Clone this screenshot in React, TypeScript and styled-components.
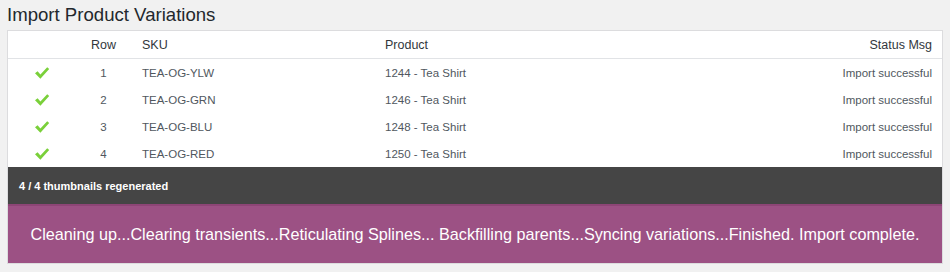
import React from 'react'
import styled, { createGlobalStyle } from 'styled-components'

const GlobalStyle = createGlobalStyle`
  html, body {
    margin: 0;
    padding: 0;
    background: #f1f1f1;
    font-family: "Liberation Sans", Arial, sans-serif;
  }
`

const Page = styled.div`
  padding: 4px 7px 0 7px;
`

const Title = styled.h1`
  margin: 0 0 5px 0;
  font-size: 18.6px;
  font-weight: 400;
  line-height: 21px;
  color: #23282d;
`

const Panel = styled.div`
  background: #fff;
  border: 1px solid #dcdcde;
  box-sizing: border-box;
`

const Table = styled.table`
  width: 100%;
  border-collapse: collapse;
  table-layout: fixed;
  font-size: 11.5px;
  color: #50575e;
`

const Th = styled.th<{ $w?: number; $align?: string }>`
  width: ${p => (p.$w ? `${p.$w}px` : 'auto')};
  text-align: ${p => p.$align || 'left'};
  font-weight: 400;
  font-size: 12.5px;
  color: #32373c;
  height: 27px;
  padding: 0 10px;
  border-bottom: 1px solid #e1e3e6;
`

const Td = styled.td<{ $align?: string }>`
  text-align: ${p => p.$align || 'left'};
  height: 27px;
  padding: 0 10px;
`

const Check = () => (
  <svg width="16" height="14" viewBox="0 0 16 14" style={{ display: 'block', margin: '0 auto' }}>
    <path d="M1 7.2 L3.6 5.2 L6.4 8.6 L13.2 1.2 L15.2 3 L6.4 12.8 Z" fill="#7ad03a" />
  </svg>
)

const StatusBar = styled.div`
  background: #454545;
  color: #fff;
  font-size: 11px;
  font-weight: 700;
  height: 37px;
  display: flex;
  align-items: center;
  padding: 0 11px;
`

const Notice = styled.div`
  background: #9c5184;
  border-top: 2px solid #8d4576;
  color: #fff;
  font-size: 16.2px;
  height: 57px;
  display: flex;
  align-items: center;
  justify-content: center;
`

const rows = [
  { row: 1, sku: 'TEA-OG-YLW', product: '1244 - Tea Shirt' },
  { row: 2, sku: 'TEA-OG-GRN', product: '1246 - Tea Shirt' },
  { row: 3, sku: 'TEA-OG-BLU', product: '1248 - Tea Shirt' },
  { row: 4, sku: 'TEA-OG-RED', product: '1250 - Tea Shirt' },
]

const App = () => {
  return (
    <>
      <GlobalStyle />
      <Page>
        <Title>Import Product Variations</Title>
        <Panel>
          <Table>
            <thead>
              <tr>
                <Th $w={47} />
                <Th $w={37} $align="center">Row</Th>
                <Th $w={223}>SKU</Th>
                <Th>Product</Th>
                <Th $w={180} $align="right">Status Msg</Th>
              </tr>
            </thead>
            <tbody>
              {rows.map(r => (
                <tr key={r.row}>
                  <Td><Check /></Td>
                  <Td $align="center">{r.row}</Td>
                  <Td>{r.sku}</Td>
                  <Td>{r.product}</Td>
                  <Td $align="right">Import successful</Td>
                </tr>
              ))}
            </tbody>
          </Table>
          <StatusBar>4 / 4 thumbnails regenerated</StatusBar>
          <Notice>
            Cleaning up...Clearing transients...Reticulating Splines... Backfilling parents...Syncing variations...Finished. Import complete.
          </Notice>
        </Panel>
      </Page>
    </>
  )
}

export default App
